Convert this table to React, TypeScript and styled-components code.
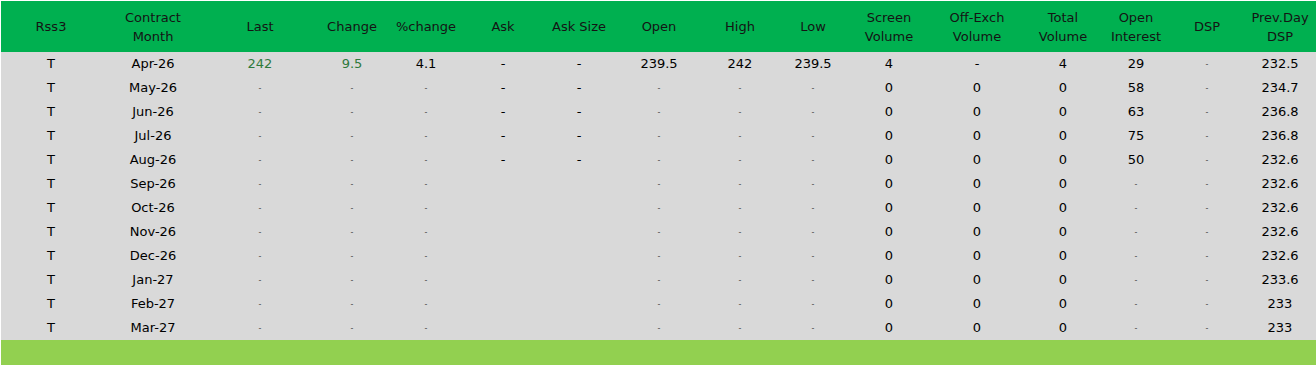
import React from "react";
import styled, { createGlobalStyle } from "styled-components";

const GlobalStyle = createGlobalStyle`
  html, body {
    margin: 0;
    padding: 0;
    background: #ffffff;
  }
  body {
    font-family: "DejaVu Sans", "Liberation Sans", sans-serif;
    font-size: 13px;
    color: #000;
  }
`;

const Wrap = styled.div`
  padding: 1px 3px 0 1px;
`;

const Table = styled.table`
  width: 1312px;
  table-layout: fixed;
  border-collapse: collapse;
  border-spacing: 0;
`;

const HeadCell = styled.th`
  height: 51px;
  padding: 0 2px;
  background: #00b050;
  color: #141414;
  font-weight: normal;
  font-size: 13px;
  line-height: 19px;
  text-align: center;
  vertical-align: middle;
`;

const Row = styled.tr`
  height: 24px;
  background: #d9d9d9;
`;

const Cell = styled.td<{ $green?: boolean }>`
  height: 24px;
  padding: 0;
  text-align: center;
  vertical-align: middle;
  line-height: 16px;
  color: ${(p) => (p.$green ? "#2e7a3c" : "#000")};
  white-space: nowrap;
  overflow: hidden;
`;

const Dot = styled.span`
  display: inline-block;
  font-size: 8px;
  line-height: 8px;
  color: #4a4a4a;
  vertical-align: middle;
`;

const Footer = styled.td`
  height: 25px;
  padding: 0;
  background: #92d050;
`;

const columns: { label: string[]; width: number }[] = [
  { label: ["Rss3"], width: 100 },
  { label: ["Contract", "Month"], width: 104 },
  { label: ["Last"], width: 110 },
  { label: ["Change"], width: 74 },
  { label: ["%change"], width: 74 },
  { label: ["Ask"], width: 80 },
  { label: ["Ask Size"], width: 72 },
  { label: ["Open"], width: 88 },
  { label: ["High"], width: 74 },
  { label: ["Low"], width: 72 },
  { label: ["Screen", "Volume"], width: 80 },
  { label: ["Off-Exch", "Volume"], width: 96 },
  { label: ["Total", "Volume"], width: 76 },
  { label: ["Open", "Interest"], width: 70 },
  { label: ["DSP"], width: 72 },
  { label: ["Prev.Day", "DSP"], width: 74 },
];

// "." = small grey dash, "" = empty cell, "g:" prefix = green value
const rows: string[][] = [
  ["T", "Apr-26", "g:242", "g:9.5", "4.1", "-", "-", "239.5", "242", "239.5", "4", "-", "4", "29", ".", "232.5"],
  ["T", "May-26", ".", ".", ".", "-", "-", ".", ".", ".", "0", "0", "0", "58", ".", "234.7"],
  ["T", "Jun-26", ".", ".", ".", "-", "-", ".", ".", ".", "0", "0", "0", "63", ".", "236.8"],
  ["T", "Jul-26", ".", ".", ".", "-", "-", ".", ".", ".", "0", "0", "0", "75", ".", "236.8"],
  ["T", "Aug-26", ".", ".", ".", "-", "-", ".", ".", ".", "0", "0", "0", "50", ".", "232.6"],
  ["T", "Sep-26", ".", ".", ".", "", "", ".", ".", ".", "0", "0", "0", ".", ".", "232.6"],
  ["T", "Oct-26", ".", ".", ".", "", "", ".", ".", ".", "0", "0", "0", ".", ".", "232.6"],
  ["T", "Nov-26", ".", ".", ".", "", "", ".", ".", ".", "0", "0", "0", ".", ".", "232.6"],
  ["T", "Dec-26", ".", ".", ".", "", "", ".", ".", ".", "0", "0", "0", ".", ".", "232.6"],
  ["T", "Jan-27", ".", ".", ".", "", "", ".", ".", ".", "0", "0", "0", ".", ".", "233.6"],
  ["T", "Feb-27", ".", ".", ".", "", "", ".", ".", ".", "0", "0", "0", ".", ".", "233"],
  ["T", "Mar-27", ".", ".", ".", "", "", ".", ".", ".", "0", "0", "0", ".", ".", "233"],
];

const renderValue = (v: string, i: number) => {
  if (v === ".") return <Cell key={i}><Dot>-</Dot></Cell>;
  if (v.startsWith("g:")) return <Cell key={i} $green>{v.slice(2)}</Cell>;
  return <Cell key={i}>{v}</Cell>;
};

const App: React.FC = () => {
  return (
    <Wrap>
      <GlobalStyle />
      <Table>
        <colgroup>
          {columns.map((c, i) => (
            <col key={i} style={{ width: c.width }} />
          ))}
        </colgroup>
        <thead>
          <tr>
            {columns.map((c, i) => (
              <HeadCell key={i}>
                {c.label.map((l, j) => (
                  <React.Fragment key={j}>
                    {j > 0 && <br />}
                    {l}
                  </React.Fragment>
                ))}
              </HeadCell>
            ))}
          </tr>
        </thead>
        <tbody>
          {rows.map((r, i) => (
            <Row key={i}>{r.map(renderValue)}</Row>
          ))}
        </tbody>
        <tfoot>
          <tr>
            <Footer colSpan={16} />
          </tr>
        </tfoot>
      </Table>
    </Wrap>
  );
};

export default App;
